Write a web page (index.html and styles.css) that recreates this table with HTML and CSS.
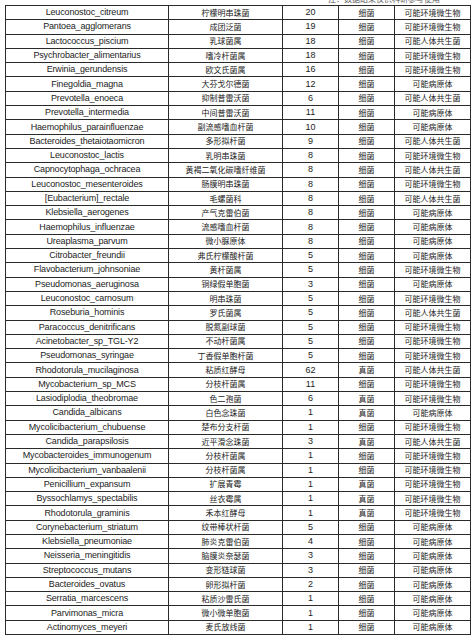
FILE: index.html
```html
<!DOCTYPE html>
<html lang="zh">
<head>
<meta charset="utf-8">
<link rel="stylesheet" href="styles.css">
</head>
<body>
<div class="page">
  <div class="caption"><span>注：数据结果仅供科研参考使用</span></div>
  <table class="grid">
    <colgroup>
      <col class="c-latin"><col class="c-cn"><col class="c-num"><col class="c-type"><col class="c-cat">
    </colgroup>
    <tbody>
      <tr><td class="lat">Leuconostoc_citreum</td><td class="cn">柠檬明串珠菌</td><td class="num">20</td><td class="cn">细菌</td><td class="cn">可能环境微生物</td></tr>
      <tr><td class="lat">Pantoea_agglomerans</td><td class="cn">成团泛菌</td><td class="num">19</td><td class="cn">细菌</td><td class="cn">可能环境微生物</td></tr>
      <tr><td class="lat">Lactococcus_piscium</td><td class="cn">乳球菌属</td><td class="num">18</td><td class="cn">细菌</td><td class="cn">可能人体共生菌</td></tr>
      <tr><td class="lat">Psychrobacter_alimentarius</td><td class="cn">嗜冷杆菌属</td><td class="num">18</td><td class="cn">细菌</td><td class="cn">可能环境微生物</td></tr>
      <tr><td class="lat">Erwinia_gerundensis</td><td class="cn">欧文氏菌属</td><td class="num">16</td><td class="cn">细菌</td><td class="cn">可能环境微生物</td></tr>
      <tr><td class="lat">Finegoldia_magna</td><td class="cn">大芬戈尔德菌</td><td class="num">12</td><td class="cn">细菌</td><td class="cn">可能病原体</td></tr>
      <tr><td class="lat">Prevotella_enoeca</td><td class="cn">抑制普雷沃菌</td><td class="num">6</td><td class="cn">细菌</td><td class="cn">可能人体共生菌</td></tr>
      <tr><td class="lat">Prevotella_intermedia</td><td class="cn">中间普雷沃菌</td><td class="num">11</td><td class="cn">细菌</td><td class="cn">可能病原体</td></tr>
      <tr><td class="lat">Haemophilus_parainfluenzae</td><td class="cn">副流感嗜血杆菌</td><td class="num">10</td><td class="cn">细菌</td><td class="cn">可能病原体</td></tr>
      <tr><td class="lat">Bacteroides_thetaiotaomicron</td><td class="cn">多形拟杆菌</td><td class="num">9</td><td class="cn">细菌</td><td class="cn">可能人体共生菌</td></tr>
      <tr><td class="lat">Leuconostoc_lactis</td><td class="cn">乳明串珠菌</td><td class="num">8</td><td class="cn">细菌</td><td class="cn">可能环境微生物</td></tr>
      <tr><td class="lat">Capnocytophaga_ochracea</td><td class="cn">黄褐二氧化碳嗜纤维菌</td><td class="num">8</td><td class="cn">细菌</td><td class="cn">可能人体共生菌</td></tr>
      <tr><td class="lat">Leuconostoc_mesenteroides</td><td class="cn">肠膜明串珠菌</td><td class="num">8</td><td class="cn">细菌</td><td class="cn">可能环境微生物</td></tr>
      <tr><td class="lat">[Eubacterium]_rectale</td><td class="cn">毛螺菌科</td><td class="num">8</td><td class="cn">细菌</td><td class="cn">可能人体共生菌</td></tr>
      <tr><td class="lat">Klebsiella_aerogenes</td><td class="cn">产气克雷伯菌</td><td class="num">8</td><td class="cn">细菌</td><td class="cn">可能病原体</td></tr>
      <tr><td class="lat">Haemophilus_influenzae</td><td class="cn">流感嗜血杆菌</td><td class="num">8</td><td class="cn">细菌</td><td class="cn">可能病原体</td></tr>
      <tr><td class="lat">Ureaplasma_parvum</td><td class="cn">微小脲原体</td><td class="num">8</td><td class="cn">细菌</td><td class="cn">可能病原体</td></tr>
      <tr><td class="lat">Citrobacter_freundii</td><td class="cn">弗氏柠檬酸杆菌</td><td class="num">5</td><td class="cn">细菌</td><td class="cn">可能病原体</td></tr>
      <tr><td class="lat">Flavobacterium_johnsoniae</td><td class="cn">黄杆菌属</td><td class="num">5</td><td class="cn">细菌</td><td class="cn">可能环境微生物</td></tr>
      <tr><td class="lat">Pseudomonas_aeruginosa</td><td class="cn">铜绿假单胞菌</td><td class="num">3</td><td class="cn">细菌</td><td class="cn">可能病原体</td></tr>
      <tr><td class="lat">Leuconostoc_carnosum</td><td class="cn">明串珠菌</td><td class="num">5</td><td class="cn">细菌</td><td class="cn">可能环境微生物</td></tr>
      <tr><td class="lat">Roseburia_hominis</td><td class="cn">罗氏菌属</td><td class="num">5</td><td class="cn">细菌</td><td class="cn">可能人体共生菌</td></tr>
      <tr><td class="lat">Paracoccus_denitrificans</td><td class="cn">脱氮副球菌</td><td class="num">5</td><td class="cn">细菌</td><td class="cn">可能环境微生物</td></tr>
      <tr><td class="lat">Acinetobacter_sp_TGL-Y2</td><td class="cn">不动杆菌属</td><td class="num">5</td><td class="cn">细菌</td><td class="cn">可能环境微生物</td></tr>
      <tr><td class="lat">Pseudomonas_syringae</td><td class="cn">丁香假单胞杆菌</td><td class="num">5</td><td class="cn">细菌</td><td class="cn">可能环境微生物</td></tr>
      <tr><td class="lat">Rhodotorula_mucilaginosa</td><td class="cn">粘质红酵母</td><td class="num">62</td><td class="cn">真菌</td><td class="cn">可能人体共生菌</td></tr>
      <tr><td class="lat">Mycobacterium_sp_MCS</td><td class="cn">分枝杆菌属</td><td class="num">11</td><td class="cn">细菌</td><td class="cn">可能环境微生物</td></tr>
      <tr><td class="lat">Lasiodiplodia_theobromae</td><td class="cn">色二孢菌</td><td class="num">6</td><td class="cn">真菌</td><td class="cn">可能环境微生物</td></tr>
      <tr><td class="lat">Candida_albicans</td><td class="cn">白色念珠菌</td><td class="num">1</td><td class="cn">真菌</td><td class="cn">可能病原体</td></tr>
      <tr><td class="lat">Mycolicibacterium_chubuense</td><td class="cn">楚布分支杆菌</td><td class="num">1</td><td class="cn">细菌</td><td class="cn">可能环境微生物</td></tr>
      <tr><td class="lat">Candida_parapsilosis</td><td class="cn">近平滑念珠菌</td><td class="num">3</td><td class="cn">真菌</td><td class="cn">可能人体共生菌</td></tr>
      <tr><td class="lat">Mycobacteroides_immunogenum</td><td class="cn">分枝杆菌属</td><td class="num">1</td><td class="cn">细菌</td><td class="cn">可能环境微生物</td></tr>
      <tr><td class="lat">Mycolicibacterium_vanbaalenii</td><td class="cn">分枝杆菌属</td><td class="num">1</td><td class="cn">细菌</td><td class="cn">可能环境微生物</td></tr>
      <tr><td class="lat">Penicillium_expansum</td><td class="cn">扩展青霉</td><td class="num">1</td><td class="cn">真菌</td><td class="cn">可能环境微生物</td></tr>
      <tr><td class="lat">Byssochlamys_spectabilis</td><td class="cn">丝衣霉属</td><td class="num">1</td><td class="cn">真菌</td><td class="cn">可能环境微生物</td></tr>
      <tr><td class="lat">Rhodotorula_graminis</td><td class="cn">禾本红酵母</td><td class="num">1</td><td class="cn">真菌</td><td class="cn">可能环境微生物</td></tr>
      <tr><td class="lat">Corynebacterium_striatum</td><td class="cn">纹带棒状杆菌</td><td class="num">5</td><td class="cn">细菌</td><td class="cn">可能病原体</td></tr>
      <tr><td class="lat">Klebsiella_pneumoniae</td><td class="cn">肺炎克雷伯菌</td><td class="num">4</td><td class="cn">细菌</td><td class="cn">可能病原体</td></tr>
      <tr><td class="lat">Neisseria_meningitidis</td><td class="cn">脑膜炎奈瑟菌</td><td class="num">3</td><td class="cn">细菌</td><td class="cn">可能病原体</td></tr>
      <tr><td class="lat">Streptococcus_mutans</td><td class="cn">变形链球菌</td><td class="num">3</td><td class="cn">细菌</td><td class="cn">可能病原体</td></tr>
      <tr><td class="lat">Bacteroides_ovatus</td><td class="cn">卵形拟杆菌</td><td class="num">2</td><td class="cn">细菌</td><td class="cn">可能病原体</td></tr>
      <tr><td class="lat">Serratia_marcescens</td><td class="cn">粘质沙雷氏菌</td><td class="num">1</td><td class="cn">细菌</td><td class="cn">可能病原体</td></tr>
      <tr><td class="lat">Parvimonas_micra</td><td class="cn">微小微单胞菌</td><td class="num">1</td><td class="cn">细菌</td><td class="cn">可能病原体</td></tr>
      <tr><td class="lat">Actinomyces_meyeri</td><td class="cn">麦氏放线菌</td><td class="num">1</td><td class="cn">细菌</td><td class="cn">可能病原体</td></tr>
    </tbody>
  </table>
</div>
</body>
</html>
```

FILE: styles.css
```css
html, body {
  margin: 0;
  padding: 0;
  background: #ffffff;
}

.page {
  padding: 0 6px 0 5px;
  font-family: "Liberation Sans", "Noto Sans CJK SC", sans-serif;
  color: #1c1c1c;
}

.caption {
  height: 5px;
  overflow: hidden;
  display: flex;
  justify-content: flex-end;
  padding-right: 30px;
}

.caption span {
  font-size: 8px;
  line-height: 8px;
  margin-top: -5px;
  color: #555;
  font-family: "Noto Sans CJK SC", sans-serif;
}

.grid {
  width: 465px;
  table-layout: fixed;
  border-collapse: collapse;
  border: 1px solid #2a2a2a;
}

.c-latin { width: 163px; }
.c-cn { width: 114px; }
.c-num { width: 56px; }
.c-type { width: 56px; }
.c-cat { width: 76px; }

.grid tr {
  height: 14.3px;
}

.grid td {
  border: 1px solid #2a2a2a;
  padding: 0;
  text-align: center;
  vertical-align: middle;
  line-height: 1;
  white-space: nowrap;
  overflow: hidden;
}

.lat {
  font-size: 9px;
  letter-spacing: -0.15px;
}

.num {
  font-size: 9px;
}

.cn {
  font-size: 8px;
  font-family: "Noto Sans CJK SC", sans-serif;
  color: #222;
}
```
